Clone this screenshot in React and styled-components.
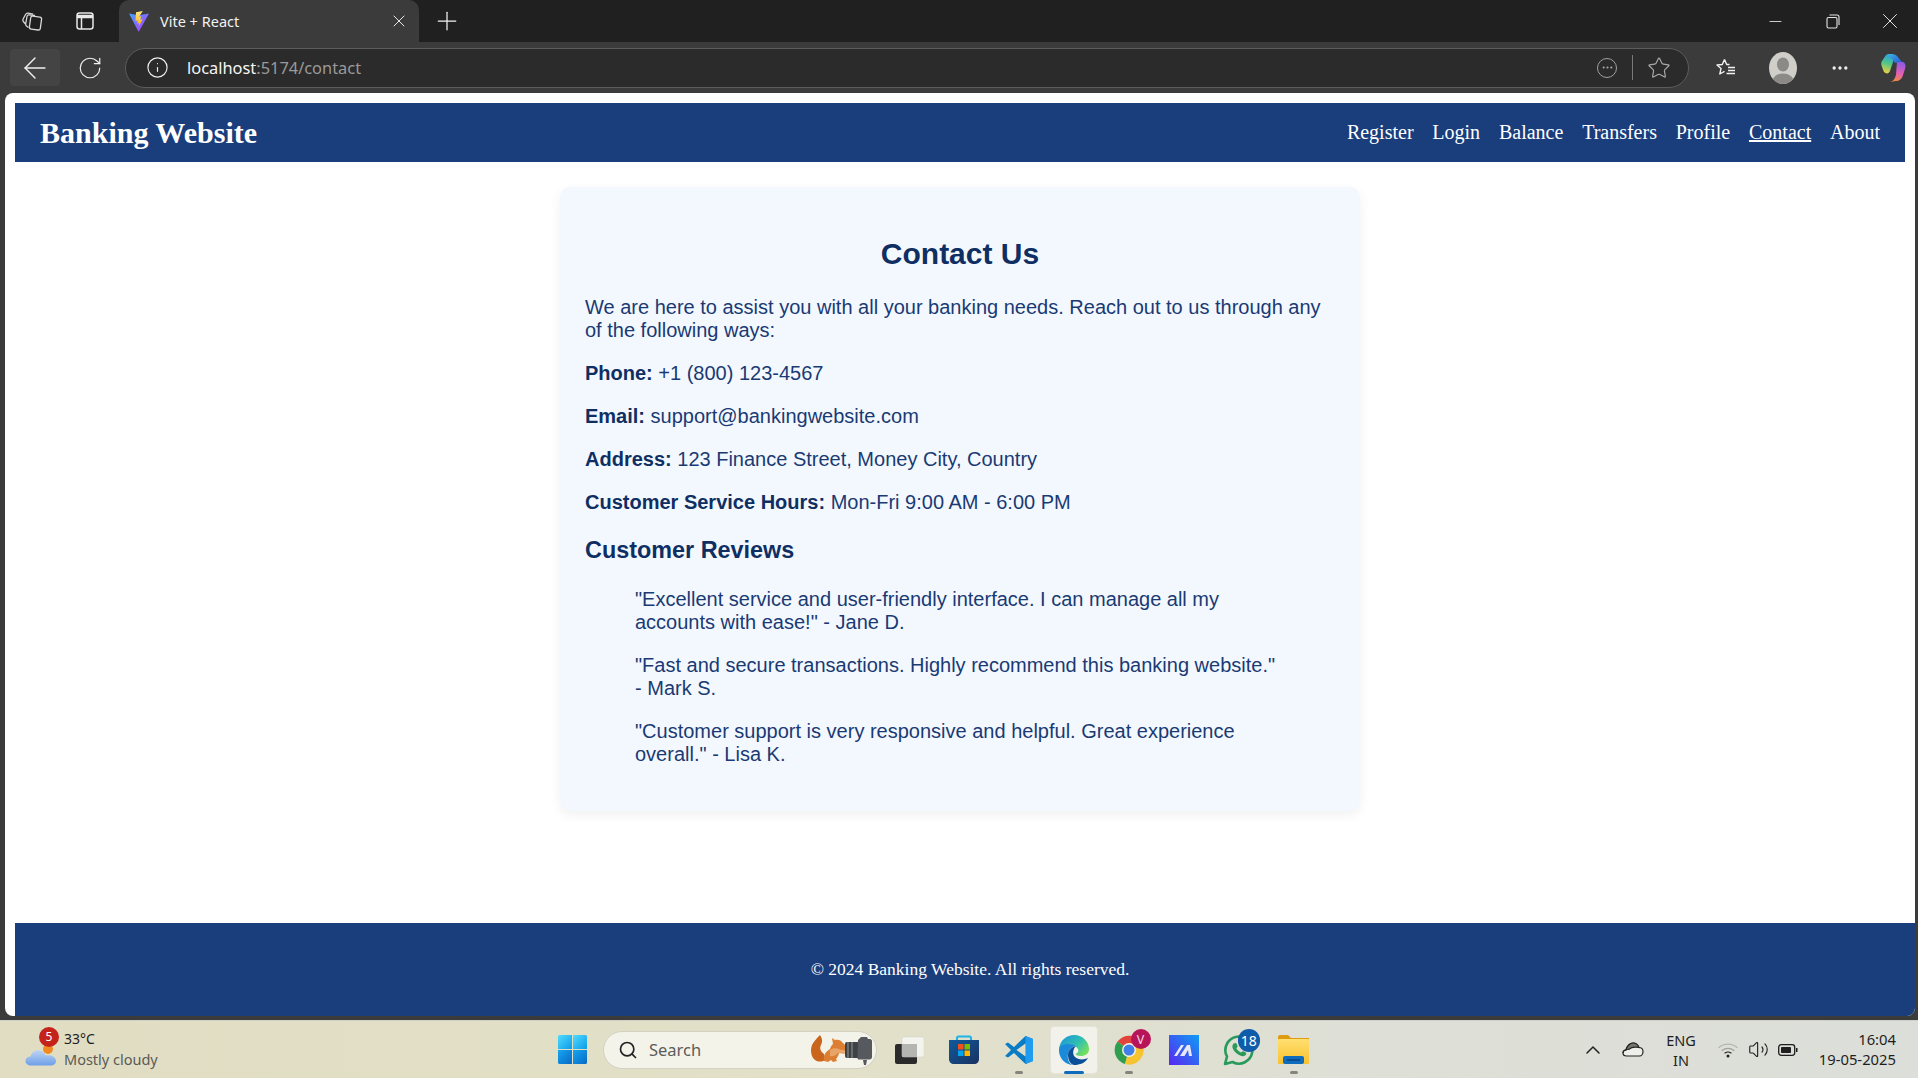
import React from 'react'
import styled, { createGlobalStyle } from 'styled-components'
import { ArrowLeft, RotateCw, Info, Star, Plus, X, Minus, Search, ChevronUp, Volume2, Ellipsis } from 'lucide-react'

const navLinks = ['Register', 'Login', 'Balance', 'Transfers', 'Profile', 'Contact', 'About']

const contactRows = [
  ['Phone:', '+1 (800) 123-4567'],
  ['Email:', 'support@bankingwebsite.com'],
  ['Address:', '123 Finance Street, Money City, Country'],
  ['Customer Service Hours:', 'Mon-Fri 9:00 AM - 6:00 PM'],
]

const reviews = [
  '"Excellent service and user-friendly interface. I can manage all my accounts with ease!" - Jane D.',
  '"Fast and secure transactions. Highly recommend this banking website." - Mark S.',
  '"Customer support is very responsive and helpful. Great experience overall." - Lisa K.',
]

function CollectionsIcon() {
  return (
    <svg width="22" height="22" viewBox="0 0 22 22" fill="none" stroke="#d8d8d8" strokeWidth="1.3">
      <rect x="9" y="6.5" width="11" height="13" rx="2" transform="rotate(8 14 13)" />
      <path d="M7.5 17.5 5.5 16c-.8-.7-1-1.500-.8-2.400L6 6.500c.2-1 1-1.700 2-1.600l6 .6" />
      <path d="M4.500 14 2.300 11.500c-.6-.8-.6-1.700-.2-2.500l2.600-4.700c.5-.9 1.400-1.300 2.400-1.100l5 1" />
    </svg>
  )
}

function VerticalTabsIcon() {
  return (
    <svg width="20" height="20" viewBox="0 0 20 20" fill="none" stroke="#e8e8e8" strokeWidth="1.5">
      <rect x="2" y="2" width="16" height="16" rx="2.500" />
      <path d="M2 5.500h16" strokeWidth="3.500" />
      <path d="M6.500 6v12" />
    </svg>
  )
}

function ViteIcon() {
  return (
    <svg width="22" height="22" viewBox="0 0 22 22">
      <defs>
        <linearGradient id="viteBody" x1="0" y1="0" x2="1" y2="1">
          <stop offset="0" stopColor="#41a4ff" />
          <stop offset="1" stopColor="#bd34fe" />
        </linearGradient>
        <linearGradient id="viteBolt" x1="0" y1="0" x2="0" y2="1">
          <stop offset="0" stopColor="#ffea83" />
          <stop offset="1" stopColor="#ffa800" />
        </linearGradient>
      </defs>
      <path d="M1 3.500 10.500 5.200 21 3.500 11.200 21c-.3.500-.8.500-1.100 0Z" fill="url(#viteBody)" />
      <path d="M14.800 1 8 2.300l-.5 8.700 2.200-.5-.5 3 2-.4-.6 3.700 4-7.500-2.300.5.900-3.500-2.200.4Z" fill="url(#viteBolt)" />
    </svg>
  )
}

function RestoreIcon() {
  return (
    <svg width="14" height="15" viewBox="0 0 14 15" fill="none" stroke="#e6e6e6" strokeWidth="1.100">
      <rect x="1" y="3.500" width="10" height="10.500" rx="1.500" />
      <path d="M3.500 1h7.500c1.200 0 2 .8 2 2v8" />
    </svg>
  )
}

function FavoritesIcon() {
  return (
    <svg width="22" height="22" viewBox="0 0 22 22" fill="none" stroke="#f2f2f2" strokeWidth="1.400" strokeLinejoin="round">
      <path d="M9.500 2.500 7.300 7.500l-5.300.5 4 3.600-1.200 5.400L9.500 14.300M9.500 2.500l2.200 5h2.800" />
      <path d="M13 10.500h7M13 13.500h7M11.500 16.500h8.500" />
    </svg>
  )
}

function AvatarIcon() {
  return (
    <svg width="28" height="32" viewBox="0 0 28 32">
      <defs>
        <clipPath id="avatarClip">
          <ellipse cx="14" cy="16" rx="14" ry="16" />
        </clipPath>
      </defs>
      <g clipPath="url(#avatarClip)">
        <rect width="28" height="32" fill="#cfcec9" />
        <ellipse cx="14" cy="12.500" rx="6" ry="7" fill="#8b8a86" />
        <ellipse cx="14" cy="30" rx="11" ry="8.500" fill="#8b8a86" />
      </g>
    </svg>
  )
}

function CopilotIcon() {
  return (
    <svg width="25" height="28" viewBox="0 0 25 28">
      <defs>
        <linearGradient id="copLeft" x1="0.500" y1="0" x2="0.300" y2="1">
          <stop offset="0" stopColor="#2f9fe6" />
          <stop offset="0.450" stopColor="#4cc58a" />
          <stop offset="1" stopColor="#f4d23c" />
        </linearGradient>
        <linearGradient id="copTop" x1="0" y1="0" x2="1" y2="1">
          <stop offset="0" stopColor="#3bb8e0" />
          <stop offset="1" stopColor="#2a55d8" />
        </linearGradient>
        <linearGradient id="copRight" x1="0.600" y1="0" x2="0.400" y2="1">
          <stop offset="0" stopColor="#8d5ae6" />
          <stop offset="0.550" stopColor="#e45fb4" />
          <stop offset="1" stopColor="#f28a3c" />
        </linearGradient>
      </defs>
      <path d="M5 1C8 0 12 0 14 2L9 17c-1 3-4 3-6 1L1 13C0 11 0 8 1 7Z" fill="url(#copLeft)" />
      <path d="M6 0c4-.5 8 0 10 2l5 6-7 1-2-3Z" fill="url(#copTop)" />
      <path d="M16 8h6c2.500 1 3 4 2 7l-2 6c-1 4-4 6-7 6l-6 1c4-1 5-4 6-7Z" fill="url(#copRight)" />
    </svg>
  )
}

function WeatherIcon() {
  return (
    <svg width="32" height="24" viewBox="0 0 32 24">
      <defs>
        <linearGradient id="cloudFill" x1="0" y1="0" x2="0" y2="1">
          <stop offset="0" stopColor="#bcd4f4" />
          <stop offset="1" stopColor="#6f9fe6" />
        </linearGradient>
      </defs>
      <circle cx="23" cy="6" r="5" fill="#f08a24" />
      <path d="M6 22.500c-3 0-5.500-1.700-5.500-4.500S3 13.500 5.500 13.500C7 9 10.500 6.500 15 7.500c3 .7 5 2.800 5.500 5 4-1 10.500.5 10.500 5.500 0 3-2.500 4.500-5.500 4.500Z" fill="url(#cloudFill)" />
    </svg>
  )
}

function WindowsIcon() {
  return (
    <svg width="29" height="29" viewBox="0 0 29 29">
      <defs>
        <linearGradient id="winA" x1="0" y1="0" x2="1" y2="1">
          <stop offset="0" stopColor="#52dcfe" />
          <stop offset="1" stopColor="#0a9be8" />
        </linearGradient>
        <linearGradient id="winB" x1="0" y1="0" x2="1" y2="1">
          <stop offset="0" stopColor="#17a6ef" />
          <stop offset="1" stopColor="#0669c8" />
        </linearGradient>
      </defs>
      <path d="M1.500 0H14v14H0V1.500C0 .7.700 0 1.500 0Z" fill="url(#winA)" />
      <path d="M15 0h12.500c.8 0 1.500.7 1.500 1.500V14H15Z" fill="url(#winA)" />
      <path d="M0 15h14v14H1.500C.7 29 0 28.300 0 27.500Z" fill="url(#winB)" />
      <path d="M15 15h14v12.500c0 .8-.7 1.500-1.500 1.500H15Z" fill="url(#winB)" />
    </svg>
  )
}

function SquirrelCameraIcon() {
  return (
    <svg width="61" height="30" viewBox="0 0 61 30">
      <path d="M9 0C11 3 12 6 10 10 8 14 10 17 13 19l1 6c-3 2-7 2-10 0C0 22-1 15 1 10 3 6 6 3 9 0Z" fill="#c9661c" />
      <path d="M13 26c-1-5 1-9 6-12 1-3 2-4 3-5l-1-6 3 2c3-1 6 0 8 3l3 3-1 5-5-1c-1 4-2 7-4 9l1 2-4 1-2-2-3 2Z" fill="#dd7f33" />
      <path d="M19 15c3-2 6-2 9-1l7 3-1 2-7-1c-2 2-5 4-8 3Z" fill="#e9a468" />
      <rect x="34" y="7" width="15" height="16" rx="2" fill="#3f4245" />
      <path d="M37 7v16M41 7v16" stroke="#85898d" strokeWidth="1.200" />
      <path d="M47 5l3-3h6l1 2h2c1 0 2 1 2 2v16c0 1.500-1 2.500-2.500 2.500H48c-1 0-1.500-.5-1.500-1.500Z" fill="#56595d" />
      <path d="M52 25h4l-1 5h-2Z" fill="#55585c" />
    </svg>
  )
}

function TaskViewIcon() {
  return (
    <svg width="30" height="28" viewBox="0 0 30 28">
      <rect x="1" y="8" width="22" height="20" rx="2" fill="#2a2a2a" />
      <rect x="8" y="1" width="22" height="20" rx="2" fill="#f7f7f5" fillOpacity="0.85" stroke="#d0d0cc" strokeWidth="0.5" />
      <rect x="8" y="8" width="15" height="13" fill="#b5b5b2" />
    </svg>
  )
}

function StoreIcon() {
  return (
    <svg width="30" height="30" viewBox="0 0 30 30">
      <defs>
        <linearGradient id="storeBag" x1="0" y1="0" x2="1" y2="1">
          <stop offset="0" stopColor="#0f5a9c" />
          <stop offset="1" stopColor="#1a3160" />
        </linearGradient>
      </defs>
      <path d="M8 5V3c0-1 .7-1.500 1.500-1.500h11c.8 0 1.500.5 1.500 1.500v2" fill="none" stroke="#1fb3e8" strokeWidth="2" />
      <path d="M0 5h30v19c0 3-2 5-5 5H5c-3 0-5-2-5-5Z" fill="url(#storeBag)" />
      <rect x="9" y="9" width="5.500" height="5.500" fill="#f25022" />
      <rect x="15.500" y="9" width="5.500" height="5.500" fill="#7fba00" />
      <rect x="9" y="15.500" width="5.500" height="5.500" fill="#00a4ef" />
      <rect x="15.500" y="15.500" width="5.500" height="5.500" fill="#ffb900" />
    </svg>
  )
}

function VsCodeIcon() {
  return (
    <svg width="30" height="30" viewBox="0 0 30 30">
      <path d="M21.500 1 10 12 4 7.500 1 9l6 6-6 6 3 1.500L10 18l11.500 11 7.500-3V4Z" fill="#0a7cc4" />
      <path d="M21.500 1 29 4v22l-7.500 3Z" fill="#1f9cf0" />
      <path d="M21.500 8.500 12.500 15l9 6.500Z" fill="#e0ddc8" />
    </svg>
  )
}

function EdgeIcon() {
  return (
    <svg width="30" height="30" viewBox="0 0 30 30">
      <defs>
        <linearGradient id="edgeTop" x1="0" y1="0" x2="1" y2="0.700">
          <stop offset="0" stopColor="#1b8fe0" />
          <stop offset="0.600" stopColor="#2fc0b0" />
          <stop offset="1" stopColor="#78de5e" />
        </linearGradient>
      </defs>
      <path d="M0 14C1 5 8 0 15 0c9 0 15 7 15 14 0 5-4 7-8 7-3 0-5-1-5.500-2 2.500-1 3.500-3 2.500-5-2-4-7-5-11-4C4 11 1 12 0 14Z" fill="url(#edgeTop)" />
      <path d="M0 14c-.5 9 6 16 15 16-5 0-7-6-6-11 1-4 4-8 8-8C12 8 2 8 0 14Z" fill="#1b8ad8" />
      <path d="M15 30c6 0 11-2 14-7-4 2-10 2-13-1-3-3-2-8 1-11-5 1-8 5-8 9 0 5 2 9 6 10Z" fill="#0b4f98" />
    </svg>
  )
}

function ChromeIcon() {
  return (
    <svg width="30" height="30" viewBox="0 0 30 30">
      <path d="M15 15 3.500 6.500A14.500 14.500 0 0 1 28 8.500H15Z" fill="#e2433b" />
      <path d="M3.500 6.500A14.500 14.500 0 0 0 11 29l4-14Z" fill="#2f9e4f" />
      <path d="M28 8.500A14.500 14.500 0 0 1 11 29l4-14Z" fill="#f6c331" />
      <circle cx="15" cy="15" r="7" fill="#f4f2e4" />
      <circle cx="15" cy="15" r="5.500" fill="#3f7fe8" />
    </svg>
  )
}

function AppMIcon() {
  return (
    <svg width="30" height="30" viewBox="0 0 30 30">
      <defs>
        <linearGradient id="appM" x1="0" y1="1" x2="1" y2="0">
          <stop offset="0" stopColor="#5a26f0" />
          <stop offset="1" stopColor="#0f9cf5" />
        </linearGradient>
      </defs>
      <rect width="30" height="30" fill="url(#appM)" />
      <path d="M5 21 12 10h3l-7 11ZM11 21l7-11h3l2 11h-3l-1-6-3.500 6Z" fill="#e8e8fa" />
    </svg>
  )
}

function WhatsAppIcon() {
  return (
    <svg width="32" height="32" viewBox="0 0 32 32">
      <path d="M2 30l2-7.500A13.500 13.500 0 1 1 9.500 28Z" fill="none" stroke="#2a9a5c" strokeWidth="2.600" strokeLinejoin="round" />
      <path d="M11 9.500c1-1 2.200-.7 2.600.2l1 2.300c.2.600-.8 1.700-1.200 2.300 1 2 2.600 3.400 4.600 4.300.6-.5 1.600-1.700 2.200-1.400l2.400 1.200c.8.400.9 1.500.2 2.400-1.200 1.500-3 1.900-5.200 1-4-1.500-6.700-4.200-8-7.700-.6-1.700 0-3.600 1.400-5Z" fill="#2a9a5c" />
    </svg>
  )
}

function FolderIcon() {
  return (
    <svg width="32" height="30" viewBox="0 0 32 30">
      <defs>
        <linearGradient id="folderFill" x1="0" y1="0" x2="0" y2="1">
          <stop offset="0" stopColor="#ffdf70" />
          <stop offset="1" stopColor="#f9c22e" />
        </linearGradient>
      </defs>
      <path d="M0 2c0-1 .7-2 2-2h8l3 3h18v6H0Z" fill="#dd9c12" />
      <rect y="4" width="31" height="25" rx="1" fill="url(#folderFill)" />
      <rect x="5" y="21" width="21" height="8" rx="2" fill="#0f6cbd" />
      <path d="M9 25h13" stroke="#063f78" strokeWidth="1.300" />
    </svg>
  )
}

function OneDriveIcon() {
  return (
    <svg width="22" height="15" viewBox="0 0 22 15" stroke="#222" strokeWidth="1.200">
      <path d="M4.500 14C2.500 14 1 12.700 1 11s1.300-3 3-3C5 4 8 1 11 1c3 0 5 2 6 4.500 2.500 0 4 2 4 4.200S19.500 14 17.500 14Z" fill="#efefea" />
      <path d="M1 11c.8-2.800 3.500-4 6-3.700 1.500-1.500 4-3 10-1.800C16 3 14 1 11 1 8 1 5 4 4 8 2.300 8 1 9.300 1 11Z" fill="#77776f" />
    </svg>
  )
}

function WifiIcon() {
  return (
    <svg width="20" height="16" viewBox="0 0 20 16" fill="none" strokeLinecap="round">
      <path d="M1 5.500C6 1 14 1 19 5.500" stroke="#b5b5ae" strokeWidth="1.200" />
      <path d="M4 8.500c3.500-2.800 8.500-2.800 12 0" stroke="#a3a39c" strokeWidth="1.200" />
      <path d="M7 11c1.800-1.200 4.200-1.200 6 0" stroke="#222" strokeWidth="1.200" />
      <circle cx="10" cy="14" r="1.500" fill="#222" />
    </svg>
  )
}

function BatteryIcon() {
  return (
    <svg width="20" height="12" viewBox="0 0 20 12">
      <rect x="0.700" y="0.700" width="16" height="10.600" rx="2.500" fill="none" stroke="#1f1f1f" strokeWidth="1.300" />
      <rect x="3" y="3" width="10" height="6" rx="0.800" fill="#1f1f1f" />
      <path d="M18 4h1.500v4H18Z" fill="#1f1f1f" />
    </svg>
  )
}

function App() {
  return (
    <>
      <GlobalStyle />
      <Screen>
        <TabStrip>
          <StripIcon><CollectionsIcon /></StripIcon>
          <StripIcon><VerticalTabsIcon /></StripIcon>
          <Tab>
            <ViteIcon />
            <TabTitle>Vite + React</TabTitle>
            <X size={20} strokeWidth={1.2} color="#e8e8e8" />
          </Tab>
          <NewTab><Plus size={30} strokeWidth={1} color="#f2f2f2" /></NewTab>
          <WindowControls>
            <WindowButton><Minus size={19} strokeWidth={1.1} color="#e6e6e6" /></WindowButton>
            <WindowButton><RestoreIcon /></WindowButton>
            <WindowButton><X size={26} strokeWidth={0.9} color="#e6e6e6" /></WindowButton>
          </WindowControls>
        </TabStrip>

        <Toolbar>
          <BackButton><ArrowLeft size={34} strokeWidth={1} color="#f0f0f0" /></BackButton>
          <ReloadButton><RotateCw size={26} strokeWidth={1.1} color="#f0f0f0" /></ReloadButton>
          <AddressBar>
            <Info size={23} strokeWidth={1.2} color="#f0f0f0" />
            <Url>localhost<UrlRest>:5174/contact</UrlRest></Url>
            <AddressTools>
              <EllipsisCircle><Ellipsis size={13} strokeWidth={2} color="#a8a8a8" /></EllipsisCircle>
              <AddressDivider />
              <Star size={24} strokeWidth={1.2} color="#a8a8a8" />
            </AddressTools>
          </AddressBar>
          <ToolSlot><FavoritesIcon /></ToolSlot>
          <ToolSlot><AvatarIcon /></ToolSlot>
          <ToolSlot><Ellipsis size={20} strokeWidth={2} color="#f0f0f0" /></ToolSlot>
          <ToolSlot><CopilotIcon /></ToolSlot>
        </Toolbar>

        <Page>
          <Navbar>
            <Brand>Banking Website</Brand>
            <NavList>
              {navLinks.map((link) => (
                <NavLink key={link} $active={link === 'Contact'}>{link}</NavLink>
              ))}
            </NavList>
          </Navbar>

          <Main>
            <Card>
              <Heading>Contact Us</Heading>
              <Copy>We are here to assist you with all your banking needs. Reach out to us through any of the following ways:</Copy>
              {contactRows.map(([label, value]) => (
                <Copy key={label}><strong>{label}</strong> {value}</Copy>
              ))}
              <SubHeading>Customer Reviews</SubHeading>
              {reviews.map((review) => (
                <Review key={review}>{review}</Review>
              ))}
            </Card>
          </Main>

          <Footer>© 2024 Banking Website. All rights reserved.</Footer>
        </Page>

        <Taskbar>
          <Weather>
            <WeatherGlyph>
              <WeatherIcon />
              <WeatherBadge>5</WeatherBadge>
            </WeatherGlyph>
            <WeatherText>
              <Temperature>33°C</Temperature>
              <Forecast>Mostly cloudy</Forecast>
            </WeatherText>
          </Weather>

          <StartSlot><WindowsIcon /></StartSlot>
          <SearchBox>
            <Search size={20} strokeWidth={2} color="#222" />
            <SearchLabel>Search</SearchLabel>
            <SquirrelCameraIcon />
          </SearchBox>
          <TaskItem><TaskViewIcon /></TaskItem>
          <TaskItem><StoreIcon /></TaskItem>
          <TaskItem $running><VsCodeIcon /></TaskItem>
          <TaskItem $focused><EdgeIcon /></TaskItem>
          <TaskItem $running>
            <ChromeIcon />
            <ProfileBadge>V</ProfileBadge>
          </TaskItem>
          <TaskItem><AppMIcon /></TaskItem>
          <TaskItem>
            <WhatsAppIcon />
            <CountBadge>18</CountBadge>
          </TaskItem>
          <TaskItem $running><FolderIcon /></TaskItem>

          <Tray>
            <TrayIcon $width={48}><ChevronUp size={24} strokeWidth={1.5} color="#222" /></TrayIcon>
            <TrayIcon $width={32}><OneDriveIcon /></TrayIcon>
            <Language>
              <span>ENG</span>
              <span>IN</span>
            </Language>
            <TrayIcon $width={30}><WifiIcon /></TrayIcon>
            <TrayIcon $width={30}><Volume2 size={21} strokeWidth={1.3} color="#222" /></TrayIcon>
            <TrayIcon $width={30}><BatteryIcon /></TrayIcon>
            <Clock>
              <span>16:04</span>
              <span>19-05-2025</span>
            </Clock>
          </Tray>
        </Taskbar>
      </Screen>
    </>
  )
}

export default App

const GlobalStyle = createGlobalStyle`
  html, body {
    margin: 0;
    padding: 0;
    overflow: hidden;
  }
`

const Screen = styled.div`
  width: 1918px;
  height: 1078px;
  display: flex;
  flex-direction: column;
  background: #3b3b3b;
  font-family: "Noto Sans", "Open Sans", sans-serif;
`

const TabStrip = styled.div`
  height: 42px;
  flex: none;
  display: flex;
  align-items: center;
  background: #202020;
  padding-left: 5px;
`

const StripIcon = styled.div`
  width: 53px;
  height: 42px;
  display: flex;
  align-items: center;
  justify-content: center;
`

const Tab = styled.div`
  width: 300px;
  height: 42px;
  margin-left: 8px;
  box-sizing: border-box;
  padding: 0 10px 0 9px;
  display: flex;
  align-items: center;
  background: #3b3b3b;
  border-radius: 10px 10px 0 0;
`

const TabTitle = styled.span`
  flex: 1;
  margin-left: 10px;
  font-size: 14.500px;
  color: #f2f2f2;
`

const NewTab = styled.div`
  width: 55px;
  display: flex;
  justify-content: center;
`

const WindowControls = styled.div`
  margin-left: auto;
  display: flex;
`

const WindowButton = styled.div`
  width: 57px;
  height: 42px;
  display: flex;
  align-items: center;
  justify-content: center;
`

const Toolbar = styled.div`
  height: 51px;
  flex: none;
  display: flex;
  align-items: center;
  padding-left: 10px;
  background: #3b3b3b;
`

const BackButton = styled.div`
  width: 50px;
  height: 37px;
  flex: none;
  display: flex;
  align-items: center;
  justify-content: center;
  background: #444;
  border-radius: 4px;
`

const ReloadButton = styled.div`
  width: 60px;
  flex: none;
  margin-right: 5px;
  display: flex;
  justify-content: center;
`

const AddressBar = styled.div`
  width: 1564px;
  height: 40px;
  box-sizing: border-box;
  flex: none;
  margin-right: 8px;
  padding: 0 17px 0 20px;
  display: flex;
  align-items: center;
  background: #2b2b2b;
  border: 1px solid #5c5c5c;
  border-radius: 20px;
`

const Url = styled.span`
  margin-left: 18px;
  font-size: 16.400px;
  color: #f5f5f5;
`

const UrlRest = styled.span`
  color: #9a9a9a;
`

const AddressTools = styled.div`
  margin-left: auto;
  display: flex;
  align-items: center;
`

const EllipsisCircle = styled.div`
  width: 20px;
  height: 20px;
  box-sizing: border-box;
  display: flex;
  align-items: center;
  justify-content: center;
  border: 1.500px solid #a0a0a0;
  border-radius: 50%;
`

const AddressDivider = styled.div`
  width: 1px;
  height: 25px;
  margin: 0 14px 0 15px;
  background: #7a7a7a;
`

const ToolSlot = styled.div`
  width: 57px;
  height: 40px;
  flex: none;
  display: flex;
  align-items: center;
  justify-content: center;

  &:last-child {
    width: 50px;
  }
`

const Page = styled.div`
  height: 923px;
  flex: none;
  margin: 0 3px 0 5px;
  box-sizing: border-box;
  padding: 10px 10px 0;
  display: flex;
  flex-direction: column;
  background: #fff;
  border-radius: 8px;
  overflow: hidden;
  font-family: "Liberation Serif", "Times New Roman", serif;
`

const Navbar = styled.nav`
  height: 59px;
  flex: none;
  display: flex;
  align-items: center;
  justify-content: space-between;
  padding: 0 25px;
  background: #1a3d7c;
  color: #fff;
`

const Brand = styled.div`
  font-size: 30px;
  font-weight: 700;
`

const NavList = styled.div`
  display: flex;
  gap: 18.800px;
`

const NavLink = styled.a`
  font-size: 20px;
  color: #fff;
  text-decoration: ${(p) => (p.$active ? 'underline' : 'none')};
`

const Main = styled.main`
  flex: 1;
  padding-top: 25px;
`

const Card = styled.section`
  width: 800px;
  margin: 0 auto;
  box-sizing: border-box;
  padding: 25px;
  background: #f3f8ff;
  border-radius: 10px;
  box-shadow: 0 4px 12px rgba(0, 0, 0, 0.06);
  font-family: "Liberation Sans", Arial, sans-serif;
  color: #1a3a73;
`

const Heading = styled.h2`
  margin: 24.900px 0;
  font-size: 30px;
  text-align: center;
  color: #0f2f63;
`

const Copy = styled.p`
  margin: 20px 0;
  font-size: 20px;

  strong {
    color: #0f2f63;
  }
`

const SubHeading = styled.h3`
  margin: 23.400px 0;
  font-size: 23.400px;
  color: #0f2f63;
`

const Review = styled.p`
  margin: 20px 50px;
  font-size: 20px;
`

const Footer = styled.footer`
  height: 93px;
  flex: none;
  margin-right: -10px;
  padding-left: 10px;
  display: flex;
  align-items: center;
  justify-content: center;
  background: #1a3d7c;
  color: #fff;
  font-size: 17.500px;
`

const Taskbar = styled.div`
  height: 58px;
  flex: none;
  margin-top: 4px;
  display: flex;
  align-items: center;
  background: linear-gradient(90deg, #e0ddc3 0%, #e2e0c8 45%, #dedfd6 70%, #dcded9 100%);
  border-top: 1px solid #cfd0c8;
  box-sizing: border-box;
`

const Weather = styled.div`
  width: 542px;
  flex: none;
  box-sizing: border-box;
  padding-left: 25px;
  display: flex;
  align-items: center;
`

const WeatherGlyph = styled.div`
  position: relative;
  width: 32px;
  height: 24px;
  margin-top: 10px;
`

const WeatherBadge = styled.div`
  position: absolute;
  top: -16px;
  left: 14px;
  width: 20px;
  height: 20px;
  display: flex;
  align-items: center;
  justify-content: center;
  border-radius: 50%;
  background: #c4231c;
  color: #fff;
  font-size: 12px;
`

const WeatherText = styled.div`
  margin: -2px 0 0 7px;
  display: flex;
  flex-direction: column;
  line-height: 20px;
`

const Temperature = styled.span`
  font-size: 14px;
  color: #1c1c1c;
`

const Forecast = styled.span`
  font-size: 14.500px;
  color: #5a5a54;
`

const StartSlot = styled.div`
  width: 61px;
  height: 44px;
  flex: none;
  display: flex;
  align-items: center;
  justify-content: center;
`

const SearchBox = styled.div`
  width: 274px;
  height: 38px;
  flex: none;
  margin-right: 4px;
  box-sizing: border-box;
  padding: 0 4px 0 14px;
  display: flex;
  align-items: center;
  background: #f4f3ea;
  border: 1px solid #d2d1c2;
  border-radius: 19px;
`

const SearchLabel = styled.span`
  flex: 1;
  margin-left: 11px;
  font-size: 16.500px;
  color: #5c5c58;
`

const TaskItem = styled.div`
  position: relative;
  width: 55px;
  height: 48px;
  flex: none;
  display: flex;
  align-items: center;
  justify-content: center;
  border-radius: 5px;
  ${(p) => p.$focused && `
    background: #f3f2ea;
    box-shadow: inset 0 0 0 1px #e5e4da;
    width: 48px;
    margin: 0 3.500px;
  `}

  &::after {
    content: '';
    display: ${(p) => (p.$running || p.$focused ? 'block' : 'none')};
    position: absolute;
    left: 50%;
    bottom: 0;
    width: ${(p) => (p.$focused ? '20px' : '8px')};
    height: 3px;
    transform: translateX(-50%);
    border-radius: 2px;
    background: ${(p) => (p.$focused ? '#0f6cbd' : '#85857d')};
  }
`

const ProfileBadge = styled.div`
  position: absolute;
  top: 3.500px;
  right: 5.500px;
  width: 20px;
  height: 20px;
  display: flex;
  align-items: center;
  justify-content: center;
  border-radius: 50%;
  background: #b8145a;
  color: #f3d7e3;
  font-size: 12.500px;
`

const CountBadge = styled.div`
  position: absolute;
  top: 3.500px;
  right: 6px;
  width: 22.500px;
  height: 22.500px;
  display: flex;
  align-items: center;
  justify-content: center;
  border-radius: 50%;
  background: #0f5cab;
  color: #fff;
  font-size: 14px;
`

const Tray = styled.div`
  margin-left: auto;
  padding-right: 22px;
  display: flex;
  align-items: center;
`

const TrayIcon = styled.div`
  width: ${(p) => p.$width}px;
  display: flex;
  justify-content: center;
`

const Language = styled.div`
  width: 64px;
  display: flex;
  flex-direction: column;
  align-items: center;
  font-size: 14.500px;
  line-height: 20px;
  color: #1f1f1f;
`

const Clock = styled.div`
  width: 93px;
  margin-top: -2px;
  display: flex;
  flex-direction: column;
  align-items: flex-end;
  font-size: 14.800px;
  line-height: 20px;
  color: #1f1f1f;
`
